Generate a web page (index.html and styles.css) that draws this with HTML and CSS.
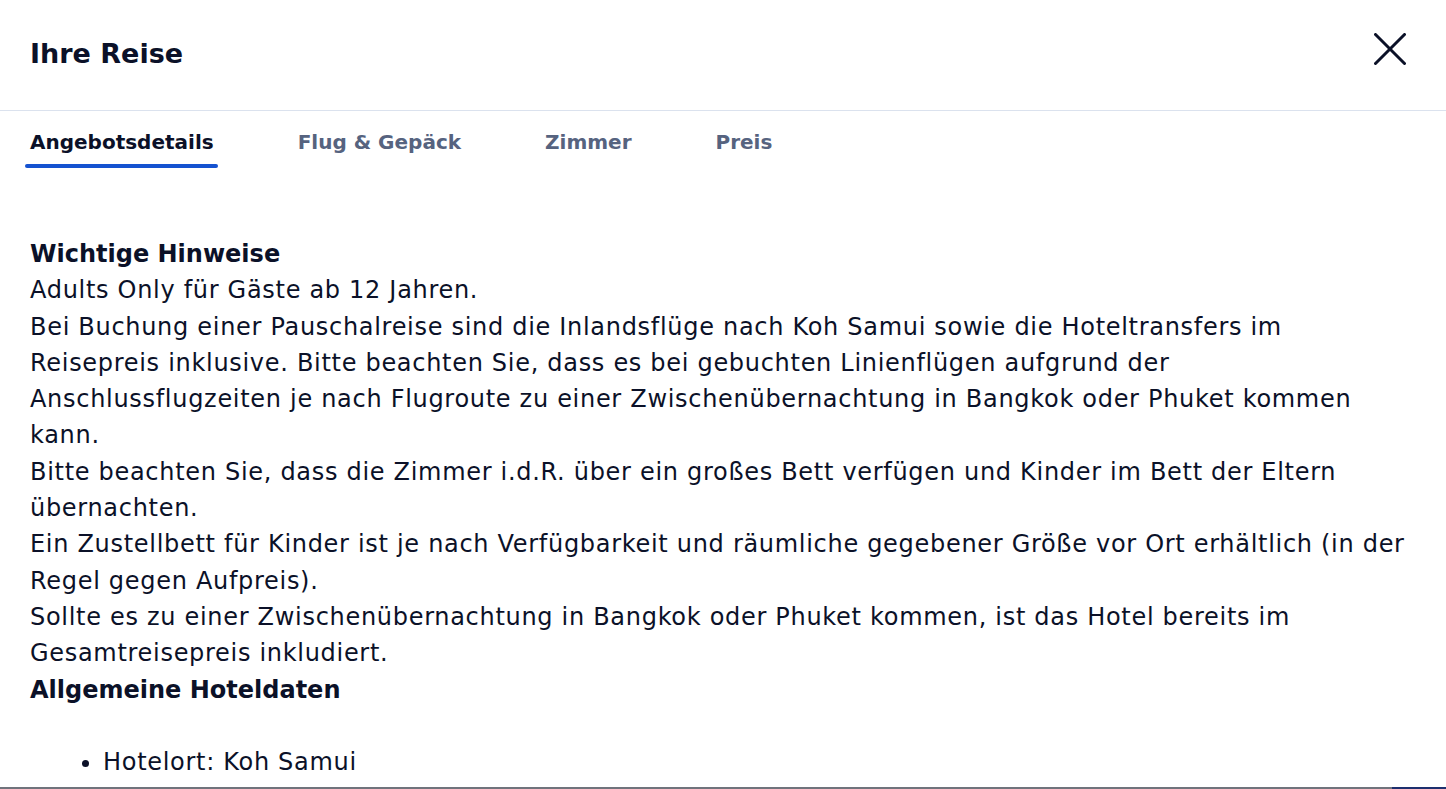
FILE: index.html
```html
<!DOCTYPE html>
<html lang="de">
<head>
<meta charset="utf-8">
<title>Ihre Reise</title>
<link rel="stylesheet" href="styles.css">
</head>
<body>
<div class="modal">
  <header class="modal-header">
    <h1 class="modal-title">Ihre Reise</h1>
    <button class="close-btn" aria-label="Schließen">
      <svg width="32" height="32" viewBox="0 0 32 32" fill="none" stroke="#0b1128" stroke-width="3" stroke-linecap="round">
        <line x1="1.5" y1="1.5" x2="30.5" y2="30.5"/>
        <line x1="30.5" y1="1.5" x2="1.5" y2="30.5"/>
      </svg>
    </button>
  </header>
  <nav class="tabs">
    <div class="tab active">Angebotsdetails</div>
    <div class="tab">Flug &amp; Gepäck</div>
    <div class="tab">Zimmer</div>
    <div class="tab">Preis</div>
  </nav>
  <div class="content">
    <div class="text">
      <strong>Wichtige Hinweise</strong><br>
      Adults Only für Gäste ab 12 Jahren.<br>
      Bei Buchung einer Pauschalreise sind die Inlandsflüge nach Koh Samui sowie die Hoteltransfers im Reisepreis inklusive. Bitte beachten Sie, dass es bei gebuchten Linienflügen aufgrund der Anschlussflugzeiten je nach Flugroute zu einer Zwischenübernachtung in Bangkok oder Phuket kommen kann.<br>
      Bitte beachten Sie, dass die Zimmer i.d.R. über ein großes Bett verfügen und Kinder im Bett der Eltern übernachten.<br>
      Ein Zustellbett für Kinder ist je nach Verfügbarkeit und räumliche gegebener Größe vor Ort erhältlich (in der Regel gegen Aufpreis).<br>
      Sollte es zu einer Zwischenübernachtung in Bangkok oder Phuket kommen, ist das Hotel bereits im Gesamtreisepreis inkludiert.<br>
      <strong>Allgemeine Hoteldaten</strong>
    </div>
    <ul class="list">
      <li>Hotelort: Koh Samui</li>
    </ul>
  </div>
</div>
<div class="backdrop">
  <div class="backdrop-fill"></div>
  <div class="backdrop-btn"></div>
</div>
</body>
</html>
```
FILE: styles.css
```css
html, body {
  margin: 0;
  padding: 0;
  height: 789px;
  overflow: hidden;
}
body {
  font-family: "DejaVu Sans", sans-serif;
  color: #0b1128;
  background: #70737c;
  display: flex;
  flex-direction: column;
}
.modal {
  height: 787px;
  flex: none;
  background: #ffffff;
  overflow: hidden;
}
.modal-header {
  height: 110px;
  border-bottom: 1px solid #dbe2ee;
  display: flex;
  justify-content: space-between;
  align-items: flex-start;
  padding: 0 40px 0 30px;
}
.modal-title {
  margin: 37px 0 0;
  font-size: 27px;
  line-height: 34px;
  font-weight: 700;
  color: #0b1128;
}
.close-btn {
  margin-top: 33px;
  padding: 0;
  border: 0;
  background: none;
  width: 32px;
  height: 32px;
  display: block;
}
.close-btn svg { display: block; }
.tabs {
  display: flex;
  gap: 84px;
  padding: 19px 0 0 30px;
}
.tab {
  padding: 0;
  font-size: 20px;
  line-height: 24px;
  font-weight: 700;
  color: #56637f;
}
.tab::after {
  content: "";
  display: block;
  height: 4px;
  margin: 10px -4px 0 -5px;
  border-radius: 2px;
  background: transparent;
}
.tab.active { color: #0b1128; }
.tab.active::after { background: #1552d0; }
.content {
  padding: 68px 35px 0 30px;
  font-size: 24px;
  line-height: 36.3px;
  letter-spacing: 0.7px;
}
.text strong {
  font-weight: 700;
  letter-spacing: 0;
}
.list {
  margin: 36px 0 0;
  padding-left: 73px;
}
.backdrop {
  flex: 1;
  display: flex;
}
.backdrop-fill { flex: 1; }
.backdrop-btn {
  width: 54px;
  background: #1d2f6e;
}
```
